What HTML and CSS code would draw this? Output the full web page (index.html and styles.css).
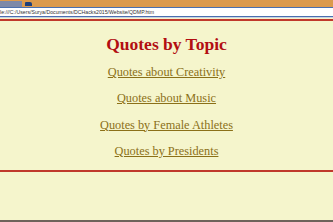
FILE: index.html
```html
<!DOCTYPE html>
<html lang="en">
<head>
    <meta charset="UTF-8">
    <title>Quotes by Topic</title>
    <link rel="stylesheet" href="styles.css">
</head>
<body>
    <div class="tabbar">
        <span class="tab"></span>
        <span class="newtab"></span>
    </div>
    <div class="addressbar">le:///C:/Users/Surya/Documents/DCHacks2015/Website/QDMP.htm</div>
    <div class="page">
        <div class="content">
            <h1 class="title">Quotes by Topic</h1>
            <ul class="topics">
                <li><a href="#">Quotes about Creativity</a></li>
                <li><a href="#">Quotes about Music</a></li>
                <li><a href="#">Quotes by Female Athletes</a></li>
                <li><a href="#">Quotes by Presidents</a></li>
            </ul>
        </div>
        <div class="filler"></div>
    </div>
    <div class="taskbar"></div>
</body>
</html>
```

FILE: styles.css
```css
html, body {
    margin: 0;
    padding: 0;
    height: 222px;
    overflow: hidden;
}

body {
    display: flex;
    flex-direction: column;
    background: #f5f5cc;
    font-family: "Liberation Serif", "Times New Roman", serif;
}

.tabbar {
    display: flex;
    align-items: flex-end;
    height: 7px;
    background: #dc9a4c;
    border-bottom: 1px solid #4a6fae;
}

.tab {
    width: 22px;
    height: 6px;
    background: #7d89a8;
}

.newtab {
    width: 7px;
    height: 4px;
    margin-left: 3px;
    margin-bottom: 1px;
    background: #1d3f7a;
    border-radius: 1px 2px 0 0;
}

.addressbar {
    height: 8px;
    line-height: 8px;
    font-family: "Liberation Sans", Arial, sans-serif;
    font-size: 5.2px;
    color: #333;
    background: #fff;
    white-space: nowrap;
    overflow: hidden;
    border-bottom: 1px solid #4a6fae;
    box-shadow: 0 1px 0 #c8d2e4;
}

.page {
    flex: 1;
    display: flex;
    flex-direction: column;
    margin-top: 2px;
    border-top: 2px solid #c0392b;
}

.content {
    border-bottom: 2px solid #c0392b;
    text-align: center;
}

.title {
    margin: 11px 0 3px;
    font-size: 17.5px;
    line-height: 24px;
    color: #b20e12;
}

.topics {
    list-style: none;
    margin: 0;
    padding: 0 0 6px;
}

.topics li {
    font-size: 12.3px;
    line-height: 26.3px;
}

.topics a {
    color: #8b7018;
}

.filler {
    flex: 1;
}

.taskbar {
    height: 2px;
    background: #6e625a;
}
```
